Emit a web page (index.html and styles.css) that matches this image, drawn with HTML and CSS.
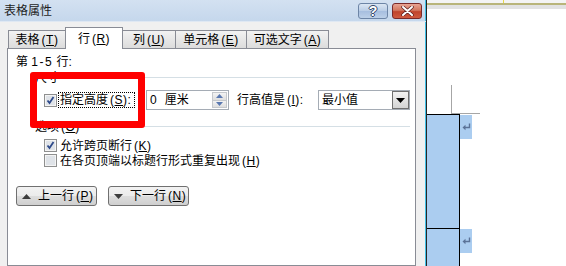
FILE: index.html
```html
<!DOCTYPE html>
<html>
<head>
<meta charset="utf-8">
<link rel="stylesheet" href="styles.css">
</head>
<body>
<div class="screen">
  <div class="dialog">
    <div class="titlebar">
      <span class="title">表格属性</span>
      <div class="caption-btns">
        <span class="cbtn help">?</span>
        <span class="cbtn close">
          <svg width="13" height="10" viewBox="0 0 13 10"><path d="M2 1 L11 9 M11 1 L2 9" stroke="#5a1f1f" stroke-width="3.4" stroke-linecap="round"/><path d="M2 1 L11 9 M11 1 L2 9" stroke="#ffffff" stroke-width="2" stroke-linecap="round"/></svg>
        </span>
      </div>
    </div>
    <div class="tabs">
      <div class="tab t1">表格<span class="acc">(<u>T</u>)</span></div>
      <div class="tab t2 active">行<span class="acc">(<u>R</u>)</span></div>
      <div class="tab t3">列<span class="acc">(<u>U</u>)</span></div>
      <div class="tab t4">单元格<span class="acc">(<u>E</u>)</span></div>
      <div class="tab t5">可选文字<span class="acc">(<u>A</u>)</span></div>
    </div>
    <div class="panel">
      <div class="rows-label">第 <span class="lat">1-5</span> 行:</div>
      <div class="group"><span class="group-label">尺寸</span><span class="group-line"></span></div>
      <div class="height-row">
        <span class="check">
          <svg width="13" height="13" viewBox="0 0 13 13"><rect x="0.5" y="0.5" width="12" height="12" fill="#f4f4f4" stroke="#8e8f8f"/><rect x="2" y="2" width="9" height="9" fill="#dfe3e8"/><path d="M3.5 6.5 L5.5 9 L9.5 3" stroke="#2e4a8a" stroke-width="1.8" fill="none"/></svg>
        </span>
        <span class="focus-label">指定高度<span class="acc">(<u>S</u>)</span>:</span>
        <span class="input">
          <span class="input-text"><span class="lat">0</span>&nbsp; 厘米</span>
          <span class="spin">
            <span class="spin-btn"><svg width="7" height="4" viewBox="0 0 7 4"><path d="M0 4 L3.5 0 L7 4Z" fill="#5a78b0"/></svg></span>
            <span class="spin-btn"><svg width="7" height="4" viewBox="0 0 7 4"><path d="M0 0 L3.5 4 L7 0Z" fill="#5a78b0"/></svg></span>
          </span>
        </span>
        <span class="rule-label">行高值是<span class="acc">(<u>I</u>)</span>:</span>
        <span class="select">
          <span class="select-text">最小值</span>
          <span class="select-btn"><svg width="9" height="5" viewBox="0 0 9 5"><path d="M0 0 L9 0 L4.5 5Z" fill="#000"/></svg></span>
        </span>
      </div>
      <div class="group group2"><span class="group-label">选项<span class="acc">(<u>O</u>)</span></span><span class="group-line"></span></div>
      <div class="opt-row">
        <span class="check">
          <svg width="13" height="13" viewBox="0 0 13 13"><rect x="0.5" y="0.5" width="12" height="12" fill="#f4f4f4" stroke="#8e8f8f"/><rect x="2" y="2" width="9" height="9" fill="#dfe3e8"/><path d="M3.5 6.5 L5.5 9 L9.5 3" stroke="#2e4a8a" stroke-width="1.8" fill="none"/></svg>
        </span>
        <span class="opt-text">允许跨页断行<span class="acc">(<u>K</u>)</span></span>
      </div>
      <div class="opt-row">
        <span class="check">
          <svg width="13" height="13" viewBox="0 0 13 13"><rect x="0.5" y="0.5" width="12" height="12" fill="#f4f4f4" stroke="#8e8f8f"/><rect x="2" y="2" width="9" height="9" fill="#dfe3e8"/></svg>
        </span>
        <span class="opt-text">在各页顶端以标题行形式重复出现<span class="acc">(<u>H</u>)</span></span>
      </div>
      <div class="btn-row">
        <span class="btn"><svg width="9" height="5" viewBox="0 0 9 5"><path d="M0 5 L4.5 0 L9 5Z" fill="#3c3c3c"/></svg><span>上一行<span class="acc">(<u>P</u>)</span></span></span>
        <span class="btn"><svg width="9" height="5" viewBox="0 0 9 5"><path d="M0 0 L4.5 5 L9 0Z" fill="#3c3c3c"/></svg><span>下一行<span class="acc">(<u>N</u>)</span></span></span>
      </div>
    </div>
  </div>
  <div class="doc">
    <div class="ruler"><span class="ruler-tick"></span></div>
    <div class="corner-mark"></div>
    <div class="trow">
      <div class="cell tall"></div>
      <div class="endmark"><svg width="9" height="8" viewBox="0 0 9 8"><path d="M7.5 0.5 V4.5 H2" stroke="#5b7398" stroke-width="1.4" fill="none"/><path d="M0.5 4.5 L3.5 1.8 V7.2Z" fill="#5b7398"/></svg></div>
    </div>
    <div class="trow">
      <div class="cell tall"></div>
      <div class="endmark"><svg width="9" height="8" viewBox="0 0 9 8"><path d="M7.5 0.5 V4.5 H2" stroke="#5b7398" stroke-width="1.4" fill="none"/><path d="M0.5 4.5 L3.5 1.8 V7.2Z" fill="#5b7398"/></svg></div>
    </div>
  </div>
  <div class="redbox"></div>
</div>
</body>
</html>
```
FILE: styles.css
```css
html, body {
  margin: 0;
  padding: 0;
  background: #ffffff;
}
.screen {
  position: relative;
  display: flex;
  width: 566px;
  height: 266px;
  overflow: hidden;
  font-family: "Liberation Sans", "Noto Sans CJK SC", sans-serif;
  font-size: 12px;
  line-height: 14px;
  color: #000;
}
u { text-decoration: underline; }
.acc {
  margin-left: 2px;
  letter-spacing: 0.5px;
}
.lat {
  letter-spacing: 1.5px;
}

/* dialog */
.dialog {
  box-sizing: border-box;
  width: 427px;
  flex: none;
  background: #f0f0f0;
  border-right: 1px solid #262626;
  box-shadow: inset -1px 0 0 #3fc0e6;
  display: flex;
  flex-direction: column;
}
.titlebar {
  height: 21px;
  flex: none;
  background: linear-gradient(#d3e1f1, #c5d7ec);
  display: flex;
  align-items: center;
  padding-left: 4px;
  padding-right: 4px;
  border-bottom: 1px solid #dfe8f3;
  box-shadow: inset -1px 0 0 #3fc0e6;
}
.title {
  font-size: 12px;
  color: #1e1e1e;
  flex: 1;
}
.caption-btns {
  display: flex;
  gap: 4px;
  align-self: flex-start;
  margin-top: 3px;
}
.cbtn {
  box-sizing: border-box;
  height: 16px;
  border-radius: 3px;
  display: flex;
  align-items: center;
  justify-content: center;
}
.help {
  width: 30px;
  border: 1px solid #6d85a6;
  background: linear-gradient(#dbe6f3 0%, #b9cde6 50%, #a6bedf 51%, #bcd0e8 100%);
  color: #fff;
  font-weight: bold;
  font-size: 14px;
  text-shadow: 1px 0 0 #34486a, -1px 0 0 #34486a, 0 1px 0 #34486a, 0 -1px 0 #34486a;
}
.close {
  width: 30px;
  border: 1px solid #7a2a2a;
  background: linear-gradient(#e8a493 0%, #d2775f 45%, #c0442c 55%, #cf5a3f 100%);
}

/* tabs */
.tabs {
  display: flex;
  align-items: flex-end;
  height: 21px;
  margin-top: 5px;
  margin-left: 8px;
  flex: none;
}
.tab {
  box-sizing: border-box;
  height: 18px;
  border: 1px solid #898c95;
  border-bottom: none;
  background: linear-gradient(#f2f2f2, #dcdcdc);
  display: flex;
  align-items: center;
  justify-content: center;
  white-space: nowrap;
  padding-top: 1px;
}
.tab + .tab { margin-left: -1px; }
.tab.active {
  height: 22px;
  background: #ffffff;
  margin-bottom: -1px;
  position: relative;
  z-index: 1;
}
.t1 { width: 58px; }
.t2 { width: 58px; }
.t3 { width: 54px; }
.t4 { width: 72px; }
.t5 { width: 83px; }

/* panel */
.panel {
  box-sizing: border-box;
  width: 409px;
  margin-left: 7px;
  flex: 1;
  background: #ffffff;
  border: 1px solid #898c95;
  padding: 0 5px 0 8px;
}
.rows-label {
  margin-top: 6px;
  height: 14px;
  white-space: pre;
}
.group {
  display: flex;
  align-items: center;
  height: 15px;
  margin-top: 1px;
  padding-left: 19px;
}
.group-line {
  flex: 1;
  height: 1px;
  background: #d5dfe5;
  margin-left: 5px;
}
.height-row {
  display: flex;
  align-items: center;
  height: 20px;
  margin-top: 5px;
  padding-left: 28px;
}
.check {
  display: flex;
  width: 13px;
  height: 13px;
  flex: none;
}
.focus-label {
  box-sizing: border-box;
  margin-left: 1px;
  width: 77px;
  height: 16px;
  border: 1px dotted #000;
  display: flex;
  align-items: center;
  padding-left: 1px;
  white-space: nowrap;
}
.input {
  box-sizing: border-box;
  margin-left: 11px;
  width: 83px;
  height: 20px;
  border: 1px solid #a5acb5;
  background: #fff;
  display: flex;
  align-items: center;
  padding-left: 3px;
}
.input-text { flex: 1; white-space: nowrap; }
.spin {
  display: flex;
  flex-direction: column;
  width: 15px;
  height: 16px;
  margin-right: 1px;
}
.spin-btn {
  flex: 1;
  display: flex;
  align-items: center;
  justify-content: center;
  background: linear-gradient(#f3f3f3, #dedede);
  border: 1px solid #c5c8cc;
}
.spin-btn + .spin-btn { border-top: none; }
.rule-label {
  margin-left: 8px;
  width: 81px;
  white-space: nowrap;
}
.select {
  box-sizing: border-box;
  width: 92px;
  height: 20px;
  border: 1px solid #a5acb5;
  background: #fff;
  display: flex;
  align-items: center;
  padding-left: 3px;
}
.select-text { flex: 1; }
.select-btn {
  box-sizing: border-box;
  width: 17px;
  height: 18px;
  border: 1px solid #707070;
  background: linear-gradient(#f2f2f2, #d4d4d4);
  display: flex;
  align-items: center;
  justify-content: center;
}
.group2 { margin-top: 9px; }
.opt-row {
  display: flex;
  align-items: center;
  height: 15px;
  padding-left: 28px;
}
.group2 + .opt-row { margin-top: 4px; }
.opt-text { margin-left: 3px; white-space: nowrap; }
.btn-row {
  display: flex;
  gap: 11px;
  margin-top: 18px;
}
.btn {
  box-sizing: border-box;
  width: 81px;
  height: 20px;
  border: 1px solid #707070;
  border-radius: 3px;
  background: linear-gradient(#f2f2f2 0%, #ebebeb 50%, #dddddd 51%, #cfcfcf 100%);
  display: flex;
  align-items: center;
  padding-left: 5px;
  gap: 7px;
  white-space: nowrap;
}

/* document */
.doc {
  flex: 1;
  display: flex;
  flex-direction: column;
  background: #fff;
}
.ruler {
  height: 10px;
  flex: none;
  background: linear-gradient(#f4f4f4 0px, #f4f4f4 3px, #b9b57a 3px, #b9b57a 5px, #e2e2e2 5px, #e2e2e2 9px, #ffffff 9px);
  display: flex;
  padding-left: 76px;
}
.ruler-tick {
  width: 1px;
  height: 3px;
  background: #e8d84a;
}
.corner-mark {
  width: 28px;
  height: 28px;
  margin-top: 75px;
  margin-left: 24px;
  border-left: 1px solid #a6a6a6;
  border-bottom: 1px solid #a6a6a6;
  flex: none;
}
.trow {
  display: flex;
  align-items: flex-start;
  flex: none;
}
.cell {
  box-sizing: border-box;
  width: 33px;
  height: 114px;
  background: #abcdf0;
  border-top: 1px solid #000;
  border-right: 1px solid #000;
}
.endmark {
  width: 12px;
  height: 24px;
  margin-top: 1px;
  background: #abcdf0;
  display: flex;
  align-items: center;
  justify-content: center;
}

/* annotation */
.redbox {
  position: absolute;
  left: 30px;
  top: 72px;
  width: 115px;
  height: 56px;
  box-sizing: border-box;
  border: 7px solid #ff0000;
  border-radius: 3px;
}
```
